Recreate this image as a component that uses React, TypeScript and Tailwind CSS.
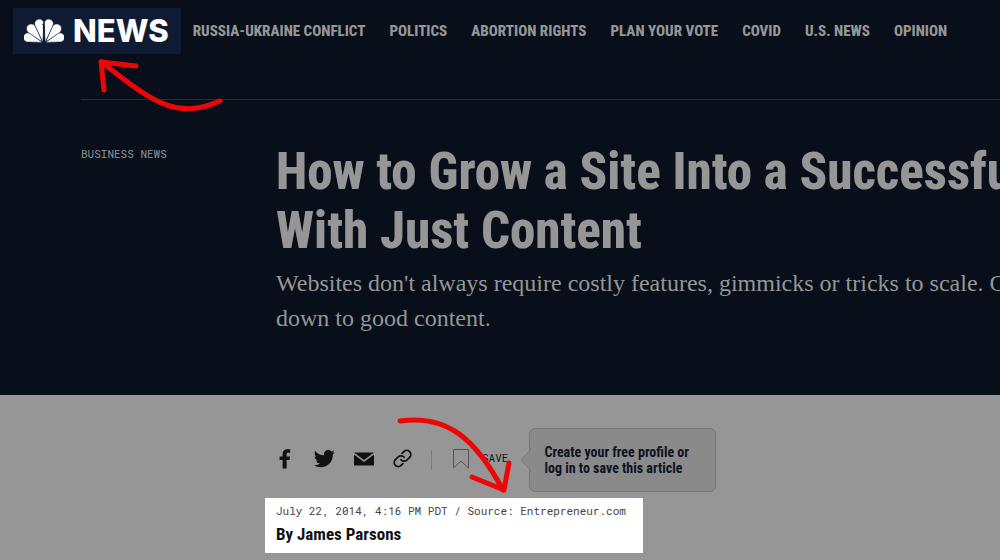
import React from 'react';

type NavItem = { label: string; href: string };

const navItems: NavItem[] = [
  { label: 'RUSSIA-UKRAINE CONFLICT', href: '#russia-ukraine' },
  { label: 'POLITICS', href: '#politics' },
  { label: 'ABORTION RIGHTS', href: '#abortion-rights' },
  { label: 'PLAN YOUR VOTE', href: '#plan-your-vote' },
  { label: 'COVID', href: '#covid' },
  { label: 'U.S. NEWS', href: '#us-news' },
  { label: 'OPINION', href: '#opinion' },
];

// three petals, mirrored for the other half
function Wing() {
  return (
    <>
      <path d="M0 0L-3.600 -13.200A4.600 4.600 0 1 1 4.600 -13.200Z" transform="translate(18.400 23.400) rotate(-73)" />
      <path d="M0 0L-4.600 -16A4.800 4.800 0 1 1 4.600 -16Z" transform="translate(18.400 23) rotate(-40)" />
      <path d="M0 0L-4.400 -17.300A4.600 4.600 0 1 1 4.400 -17.300Z" transform="translate(18.800 23) rotate(-11)" />
    </>
  );
}

function Peacock() {
  return (
    <svg width="40" height="24" viewBox="0 0 40 24" fill="#fff" stroke="#0f1b33" strokeWidth=".5" aria-hidden="true">
      <Wing />
      <g transform="translate(40 0) scale(-1 1)">
        <Wing />
      </g>
      <path d="M18.200 5.500L19.200 7L18.800 8.500L20 22L20.900 8L20.200 3Z" fill="#0f1b33" stroke="none" />
    </svg>
  );
}

function Arrows() {
  return (
    <svg
      className="pointer-events-none absolute top-0 left-0"
      width="720"
      height="500"
      viewBox="0 0 720 500"
      fill="none"
      stroke="#ee0606"
      strokeWidth="5"
      strokeLinecap="round"
      strokeLinejoin="round"
      aria-hidden="true"
    >
      <path d="M220 101C180 118 158 108 102 62" />
      <path d="M104 90L101 62L136 66" />
      <path d="M400 421C448 414 476 440 503 490" />
      <path d="M472 477L504 490L509 463" />
    </svg>
  );
}

export default function App() {
  return (
    <div className="relative min-h-screen overflow-hidden bg-[#969696] font-['Roboto_Condensed','Roboto',sans-serif]">
      <div className="bg-[#080f1b] pb-[59px]">
        <header className="flex items-center gap-3 pt-2 pl-[13px]">
          <a
            href="#home"
            aria-label="NBC News"
            className="flex h-[46px] shrink-0 items-center gap-[9px] bg-[#0f1b33] pr-3 pl-[11px] font-['Inter',sans-serif] text-[31px] font-extrabold text-white"
          >
            <Peacock />
            NEWS
          </a>
          <nav className="flex gap-6 text-[15px] font-extrabold whitespace-nowrap text-[#969696]">
            {navItems.map((item) => (
              <a key={item.label} href={item.href}>
                {item.label}
              </a>
            ))}
          </nav>
        </header>

        <div className="mt-[45px] ml-[81px] flex border-t border-[#242c38] pt-[42px]">
          <a
            href="#business"
            className="mt-1 w-[195px] shrink-0 font-['Roboto_Mono',monospace] text-[11px] leading-4 text-[#8b8f96]"
          >
            BUSINESS NEWS
          </a>
          <div className="whitespace-nowrap text-[#969696]">
            <h1 className="text-[51px] leading-[59px] font-extrabold">
              How to Grow a Site Into a Successful
              <br />
              With Just Content
            </h1>
            <p className="mt-[6px] font-['Liberation_Serif',serif] text-2xl leading-[35px]">
              Websites don't always require costly features, gimmicks or tricks to scale. Often
              <br />
              down to good content.
            </p>
          </div>
        </div>
      </div>

      <main className="pl-[265px]">
        <div className="flex items-center pt-[33px] pl-[11px] text-[#111]">
          <div className="flex items-center gap-[19px] pb-[3px]">
            <a href="#facebook" aria-label="Facebook">
              <svg width="19" height="20" viewBox="0 0 19 20" fill="currentColor">
                <path d="M6.6 19.500V11H3.600V7.400H6.600V5C6.600 1.800 8.500 .3 11.300 .3C12.800 .3 13.800 .4 14.200 .5V3.700H12.400C11 3.700 10.600 4.400 10.600 5.400V7.400H14L13.500 11H10.600V19.500Z" />
              </svg>
            </a>
            <a href="#twitter" aria-label="Twitter">
              <svg width="21" height="21" viewBox="0 0 24 24" fill="currentColor">
                <path d="M23.6 4.6c-.9.4-1.8.7-2.8.8 1-.6 1.8-1.6 2.2-2.7-1 .6-2 1-3.100 1.200A4.900 4.900 0 0 0 11.500 8.400C7.400 8.200 3.800 6.300 1.400 3.300.1 5.600.7 8.500 2.900 9.900c-.8 0-1.600-.2-2.200-.6 0 2.400 1.700 4.400 3.900 4.900-.7.2-1.500.2-2.200.1.600 2 2.400 3.400 4.600 3.400A9.900 9.900 0 0 1 0 19.700a14 14 0 0 0 7.500 2.200c9.100 0 14.300-7.700 14-14.600.9-.7 1.700-1.600 2.100-2.700Z" />
              </svg>
            </a>
            <a href="#email" aria-label="Email">
              <svg width="20" height="14" viewBox="0 0 20 14" fill="currentColor">
                <path d="M0 .5H20L10 8Z" />
                <path d="M0 2.400L10 10L20 2.400V13.500H0Z" />
              </svg>
            </a>
            <a href="#link" aria-label="Copy link">
              <svg width="19" height="19" viewBox="0 0 24 24" fill="none" stroke="currentColor" strokeWidth="2.200" strokeLinecap="round">
                <path d="M10 13.500a5 5 0 0 0 7.500.5l3.500-3.500a5 5 0 0 0-7.200-7.200l-2.300 2.300" />
                <path d="M14 10.500a5 5 0 0 0-7.500-.5L3 13.500a5 5 0 0 0 7.200 7.200l2.300-2.300" />
              </svg>
            </a>
          </div>
          <span className="ml-[19px] h-5 w-px bg-[#7c7c7c]" />
          <button type="button" className="ml-5 flex items-center gap-3 pb-[3px] font-['Roboto_Mono',monospace] text-[11px]">
            <svg width="18" height="20" viewBox="0 0 18 20" fill="none" stroke="#555" aria-hidden="true">
              <path d="M1.500 .500H16.500V19L9 12L1.500 19Z" />
            </svg>
            SAVE
          </button>
          <div className="relative ml-[21px] rounded-md border border-[#787878] bg-[#8a8a8a] py-[15px] pr-[26px] pl-[14px] text-sm leading-4 font-bold text-[#0c1322]">
            <svg className="absolute top-5 -left-[10px]" width="11" height="22" viewBox="0 0 11 22" fill="#8a8a8a" aria-hidden="true">
              <path d="M11 0L1 11L11 22" stroke="#7c7c7c" />
            </svg>
            Create your free profile or
            <br />
            log in to save this article
          </div>
        </div>

        <div className="mt-[6px] w-fit bg-white pt-1 pr-[17px] pb-[9px] pl-[11px] text-[#111]">
          <p className="font-['Roboto_Mono',monospace] text-[11px] leading-[18px] text-[#444]">
            July 22, 2014, 4:16 PM PDT / Source: Entrepreneur.com
          </p>
          <p className="mt-1 text-[17px] leading-5 font-bold">By James Parsons</p>
        </div>
      </main>

      <Arrows />
    </div>
  );
}
